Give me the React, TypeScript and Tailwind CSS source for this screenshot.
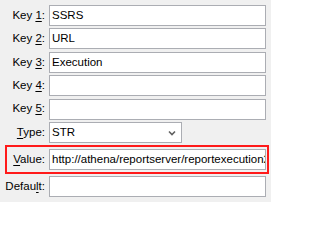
import React from 'react'

function Label({ before, mnemonic, after }: { before: string; mnemonic: string; after: string }) {
    return (
        <span>
            {before}
            <span className="underline underline-offset-[2px]">{mnemonic}</span>
            {after}
        </span>
    )
}

function TextBox({ value = '' }: { value?: string }) {
    return (
        <div className="h-[21px] w-[217px] border border-[#abadb3] bg-white pl-[2px] flex items-center overflow-hidden whitespace-nowrap">
            {value}
        </div>
    )
}

function Row({ label, children }: { label: React.ReactNode; children: React.ReactNode }) {
    return (
        <div className="flex items-center h-[21px]">
            <div className="w-[45px] text-right">{label}</div>
            <div className="ml-[4px]">{children}</div>
        </div>
    )
}

export default function App() {
    return (
        <div
            className="w-[271px] h-[202px] bg-[#f0f0f0] text-black text-[11.5px] pt-[5px] overflow-hidden"
            style={{ fontFamily: '"Liberation Sans", Arial, sans-serif' }}
        >
            <div className="flex flex-col gap-[2.4px]">
                <Row label={<Label before="Key " mnemonic="1" after=":" />}>
                    <TextBox value="SSRS" />
                </Row>
                <Row label={<Label before="Key " mnemonic="2" after=":" />}>
                    <TextBox value="URL" />
                </Row>
                <Row label={<Label before="Key " mnemonic="3" after=":" />}>
                    <TextBox value="Execution" />
                </Row>
                <Row label={<Label before="Key " mnemonic="4" after=":" />}>
                    <TextBox />
                </Row>
                <Row label={<Label before="Key " mnemonic="5" after=":" />}>
                    <TextBox />
                </Row>
                <Row label={<Label before="" mnemonic="T" after="ype:" />}>
                    <div className="h-[21px] w-[133px] border border-[#abadb3] bg-white pl-[2px] pr-[5px] flex items-center justify-between">
                        <span>STR</span>
                        <svg width="8" height="6" viewBox="0 0 8 6" className="mt-[1px]">
                            <path d="M1 1.5 L4 4.5 L7 1.5" fill="none" stroke="#606060" strokeWidth="1.6" />
                        </svg>
                    </div>
                </Row>
            </div>

            <div className="mt-[2px] ml-[5px] w-[264px] border-2 border-[#ff1a1a] py-[2px] flex items-center">
                <div className="w-[38px] text-right">
                    <Label before="" mnemonic="V" after="alue:" />
                </div>
                <div className="ml-[4px]">
                    <TextBox value="http://athena/reportserver/reportexecution2005" />
                </div>
            </div>

            <div className="mt-[2px]">
                <Row label={<Label before="Defau" mnemonic="l" after="t:" />}>
                    <TextBox />
                </Row>
            </div>
        </div>
    )
}
